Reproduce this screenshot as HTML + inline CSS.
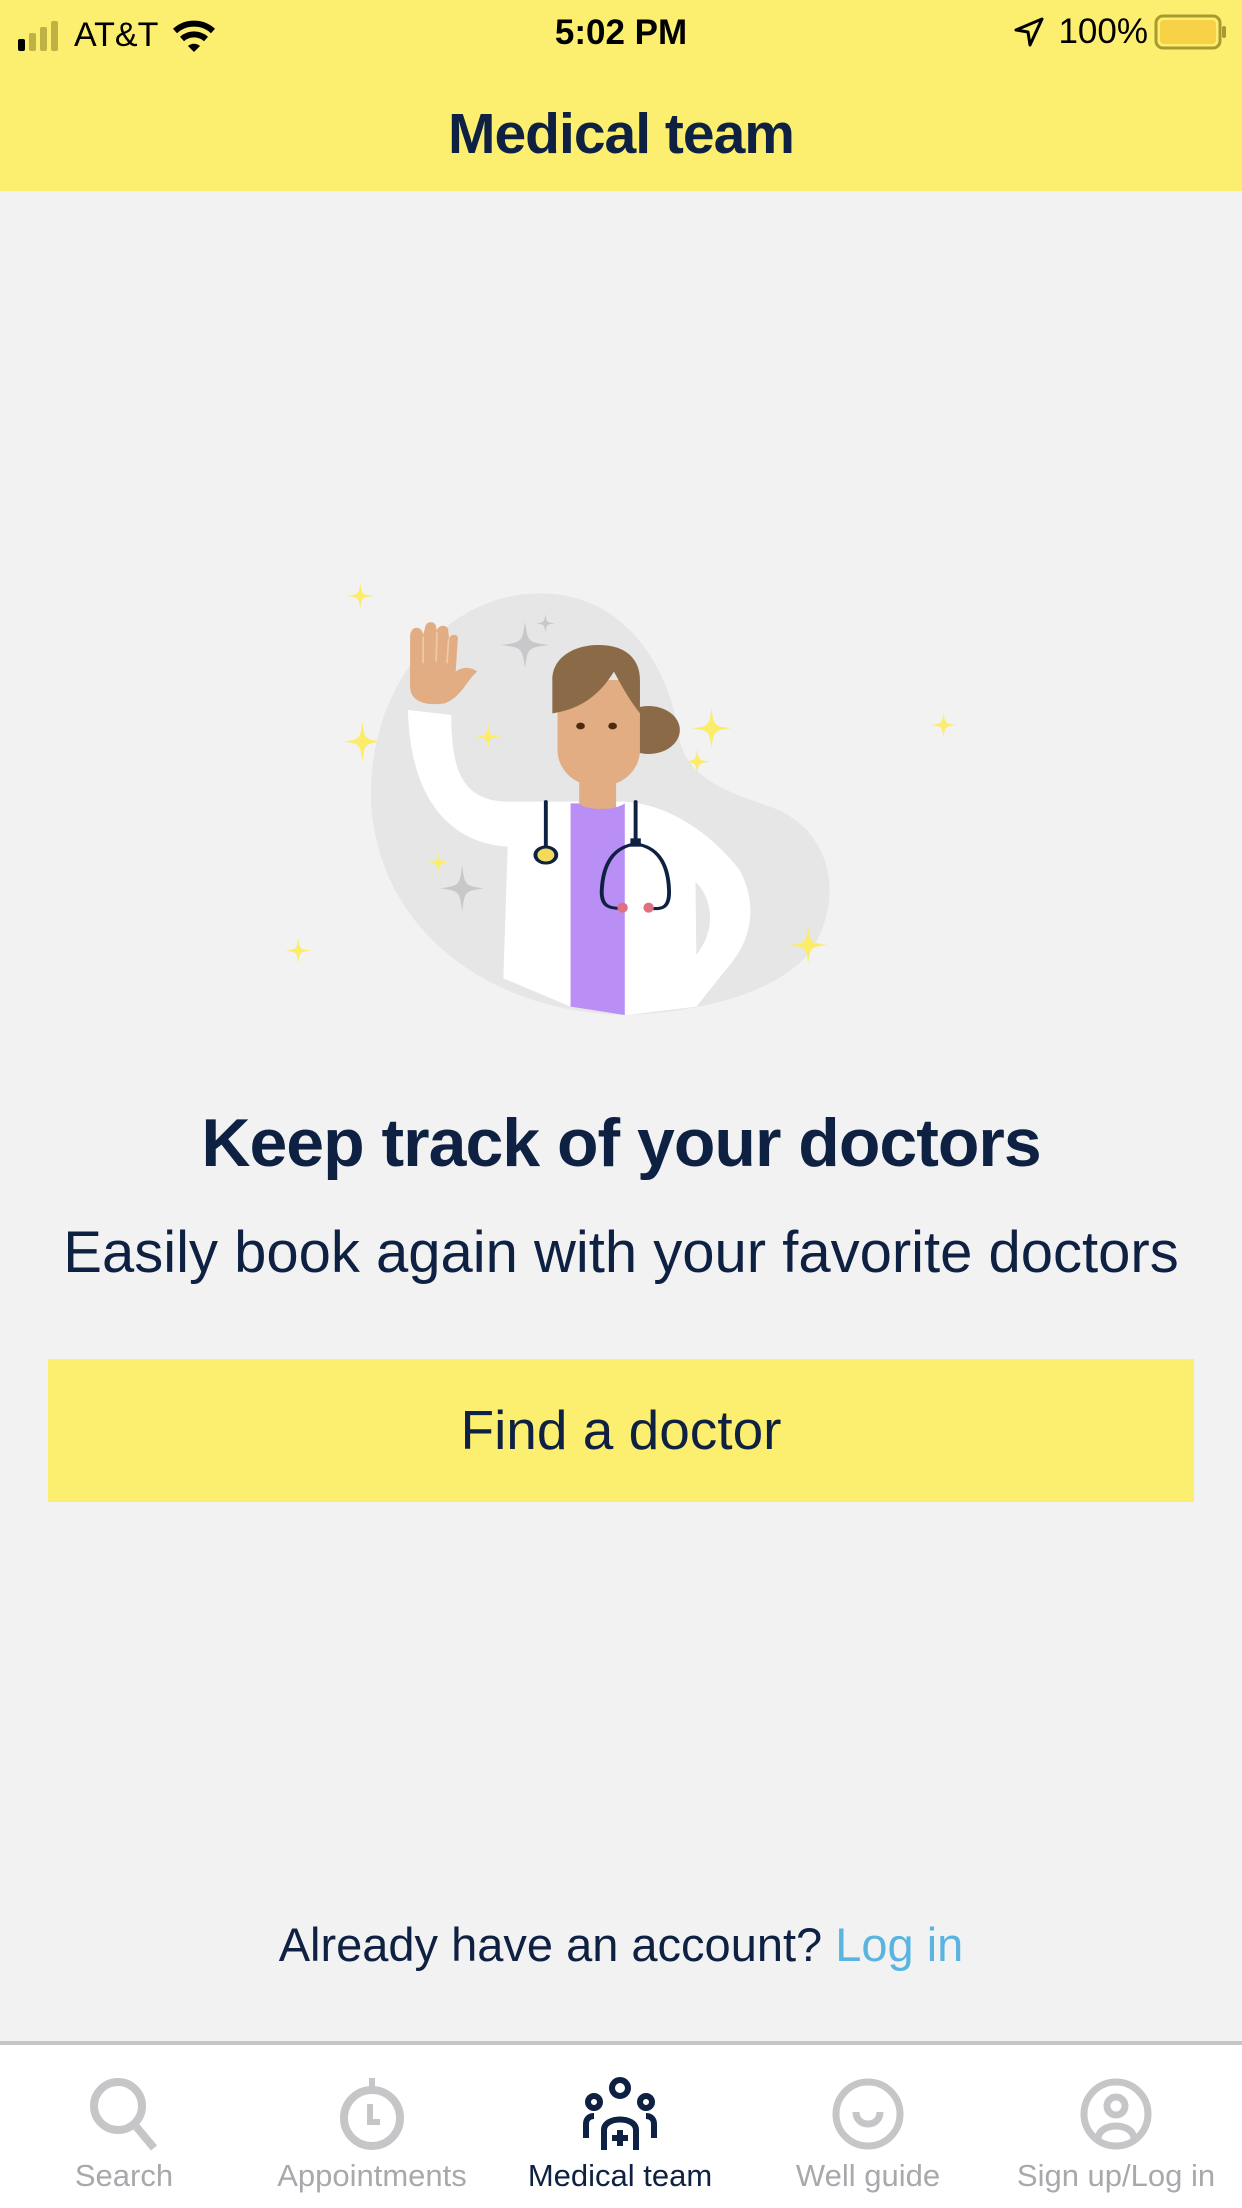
<!DOCTYPE html>
<html><head><meta charset="utf-8"><style>
*{margin:0;padding:0;box-sizing:border-box}
body{width:1242px;height:2208px;background:#f2f2f2;font-family:"Liberation Sans",sans-serif;color:#0f2143;position:relative;overflow:hidden}
.abs{position:absolute}
.hdr{left:0;top:0;width:1242px;height:191px;background:#fcee6e}
.c{left:0;width:1242px;text-align:center;white-space:nowrap}
.tab{position:absolute;top:2076px;width:248px;text-align:center;font-size:31px;color:#a9a9ad}
.tab svg{display:block;margin:0 auto}
.tab div{margin-top:6px}
</style></head><body>
<div class="abs hdr"></div>
<div class="abs" style="left:18px;top:16px;font-size:34px;color:#000;display:flex;align-items:center">
 <svg width="50" height="30" viewBox="0 0 50 30"><rect x="0" y="18" width="7" height="12" rx="2" fill="#000"/><rect x="11" y="12" width="7" height="18" rx="2" fill="#bfb143"/><rect x="22" y="6" width="7" height="24" rx="2" fill="#bfb143"/><rect x="33" y="0" width="7" height="30" rx="2" fill="#bfb143"/></svg>
 <span style="margin-left:6px">AT&amp;T</span>
 <svg style="margin-left:14px" width="44" height="34" viewBox="0 0 44 34"><path d="M3 12 A28 28 0 0 1 41 12" stroke="#000" stroke-width="6" fill="none"/><path d="M10 20 A18 18 0 0 1 34 20" stroke="#000" stroke-width="6" fill="none"/><path d="M16 27 A9 9 0 0 1 28 27 L22 33Z" fill="#000"/></svg>
</div>
<div class="abs c" style="top:13px;font-size:35px;color:#000;font-weight:bold">5:02 PM</div>
<div class="abs" style="right:14px;top:12px;font-size:35px;color:#000;display:flex;align-items:center">
 <svg width="30" height="30" viewBox="0 0 30 30"><path d="M28 2 L2 13 L14 15 L16 28 Z" stroke="#000" stroke-width="3" fill="none" stroke-linejoin="round"/></svg>
 <span style="margin-left:14px">100%</span>
 <svg style="margin-left:6px" width="74" height="36" viewBox="0 0 74 36"><rect x="2" y="2" width="64" height="32" rx="7" fill="none" stroke="#a89a2e" stroke-width="3"/><rect x="6" y="6" width="56" height="24" rx="4" fill="#f6d146"/><rect x="68" y="12" width="4" height="12" rx="2" fill="#a89a2e"/></svg>
</div>
<div class="abs c" style="top:101px;font-size:57px;font-weight:bold;letter-spacing:-1px">Medical team</div>

<svg class="abs" style="left:280px;top:570px" width="680" height="450" viewBox="0 0 1568 1350" preserveAspectRatio="none">
 <defs><path id="sp" d="M0 -1 C0.12 -0.12 0.12 -0.12 1 0 C0.12 0.12 0.12 0.12 0 1 C-0.12 0.12 -0.12 0.12 -1 0 C-0.12 -0.12 -0.12 -0.12 0 -1Z"/></defs>
 <path d="M600 70 C800 70 900 300 920 500 C940 640 1050 670 1150 720 C1280 800 1300 1000 1220 1150 C1120 1300 900 1330 800 1335 C500 1330 230 1100 210 700 C200 350 380 70 600 70Z" fill="#e6e6e6"/>
 <g fill="#c8c8cb"><use href="#sp" transform="translate(565,225) scale(55,70)"/><use href="#sp" transform="translate(612,160) scale(22,28)"/><use href="#sp" transform="translate(420,955) scale(50,70)"/></g>
 <g fill="#fbec6c"><use href="#sp" transform="translate(185,78) scale(32,38)"/><use href="#sp" transform="translate(190,515) scale(45,60)"/><use href="#sp" transform="translate(480,500) scale(30,38)"/><use href="#sp" transform="translate(995,475) scale(45,60)"/><use href="#sp" transform="translate(962,575) scale(30,38)"/><use href="#sp" transform="translate(1530,465) scale(30,38)"/><use href="#sp" transform="translate(365,878) scale(25,32)"/><use href="#sp" transform="translate(42,1142) scale(30,38)"/><use href="#sp" transform="translate(1218,1125) scale(45,55)"/></g>
 <path d="M300 200 C300 165 328 165 330 195 L335 170 C338 150 362 152 360 175 L362 180 C368 160 390 165 388 185 L390 205 C395 188 414 192 410 210 L405 305 C420 290 440 290 455 305 C430 330 420 380 380 400 C330 410 300 390 300 350Z" fill="#e2ad82"/>
 <g stroke="#f0c9a6" stroke-width="4"><line x1="330" y1="200" x2="330" y2="280"/><line x1="362" y1="185" x2="360" y2="275"/><line x1="389" y1="205" x2="385" y2="280"/></g>
 <path d="M295 420 L395 435 C395 600 420 690 520 695 L790 695 C900 700 1000 800 1060 900 C1100 1000 1090 1100 1040 1180 L960 1310 L800 1335 L670 1310 L515 1225 L525 830 C400 820 300 700 295 420Z" fill="#fff"/>
 <path d="M958 935 C1000 990 1005 1080 960 1155Z" fill="#e6e6e6"/>
 <rect x="690" y="590" width="85" height="130" fill="#e2ad82"/>
 <path d="M670 700 L690 700 C700 720 770 725 795 700 L795 1335 L670 1310Z" fill="#b98ef5"/>
 <circle cx="850" cy="480" r="72" fill="#8b6a48"/>
 <path d="M640 330 L830 330 L830 540 C830 600 790 650 735 650 C680 650 640 600 640 540Z" fill="#e2ad82"/>
 <path d="M628 430 L628 330 C628 260 680 225 735 225 C800 225 830 270 830 330 L830 430 C800 380 785 340 770 305 C730 390 680 420 628 430Z" fill="#8b6a48"/>
 <circle cx="693" cy="468" r="10" fill="#4a2a12"/><circle cx="767" cy="468" r="10" fill="#4a2a12"/>
 <g stroke="#0f2143" stroke-width="9" fill="none" stroke-linecap="round">
  <line x1="613" y1="695" x2="613" y2="830"/>
  <line x1="820" y1="695" x2="820" y2="815"/>
  <path d="M820 822 C770 830 745 880 742 960 C740 1010 760 1015 785 1015"/>
  <path d="M820 822 C870 830 895 880 897 960 C899 1015 880 1018 855 1015"/>
 </g>
 <circle cx="613" cy="855" r="24" fill="#f0dc5a" stroke="#0f2143" stroke-width="9"/>
 <rect x="808" y="805" width="24" height="25" fill="#0f2143"/>
 <ellipse cx="790" cy="1013" rx="12" ry="15" fill="#e07080"/><ellipse cx="850" cy="1013" rx="12" ry="15" fill="#e07080"/>
</svg>

<div class="abs c" style="top:1104px;font-size:68px;font-weight:bold;letter-spacing:-1px">Keep track of your doctors</div>
<div class="abs c" style="top:1219px;font-size:58px">Easily book again with your favorite doctors</div>
<div class="abs" style="left:48px;top:1359px;width:1146px;height:143px;background:#fcee6e;text-align:center;line-height:143px;font-size:55px">Find a doctor</div>
<div class="abs c" style="top:1917px;font-size:47px">Already have an account? <span style="color:#5ab4e0">Log in</span></div>

<div class="abs" style="left:0;top:2041px;width:1242px;height:4px;background:#c6c6c8"></div>
<div class="abs" style="left:0;top:2045px;width:1242px;height:163px;background:#fff"></div>
<div class="tab" style="left:0">
 <svg width="76" height="76" viewBox="0 0 76 76"><circle cx="32" cy="30" r="24" stroke="#c6c6c9" stroke-width="8" fill="none"/><line x1="48" y1="48" x2="68" y2="72" stroke="#c6c6c9" stroke-width="8"/></svg><div>Search</div></div>
<div class="tab" style="left:248px">
 <svg width="76" height="76" viewBox="0 0 76 76"><circle cx="38" cy="42" r="28" stroke="#c6c6c9" stroke-width="8" fill="none"/><line x1="38" y1="2" x2="38" y2="12" stroke="#c6c6c9" stroke-width="6"/><path d="M36 28 V46 H46" stroke="#c6c6c9" stroke-width="6" fill="none"/></svg><div>Appointments</div></div>
<div class="tab" style="left:496px;color:#0f2143">
 <svg width="76" height="76" viewBox="0 0 76 76" fill="none" stroke="#0f2143" stroke-width="6"><circle cx="38" cy="12" r="8"/><circle cx="12" cy="26" r="6"/><circle cx="64" cy="26" r="6"/><path d="M22 74 V54 C22 40 54 40 54 54 V74"/><path d="M4 62 V48 C4 42 8 40 12 40"/><path d="M72 62 V48 C72 42 68 40 64 40"/><path d="M38 54 V70 M30 62 H46"/></svg><div>Medical team</div></div>
<div class="tab" style="left:744px">
 <svg width="76" height="76" viewBox="0 0 76 76" fill="none" stroke="#c6c6c9" stroke-width="7"><circle cx="38" cy="38" r="32"/><path d="M26 36 C26 52 50 52 50 36"/></svg><div>Well guide</div></div>
<div class="tab" style="left:992px">
 <svg width="76" height="76" viewBox="0 0 76 76" fill="none" stroke="#c6c6c9" stroke-width="7"><circle cx="38" cy="38" r="32"/><circle cx="38" cy="30" r="9"/><path d="M20 62 C22 46 54 46 56 62"/></svg><div>Sign up/Log in</div></div>
</body></html>
